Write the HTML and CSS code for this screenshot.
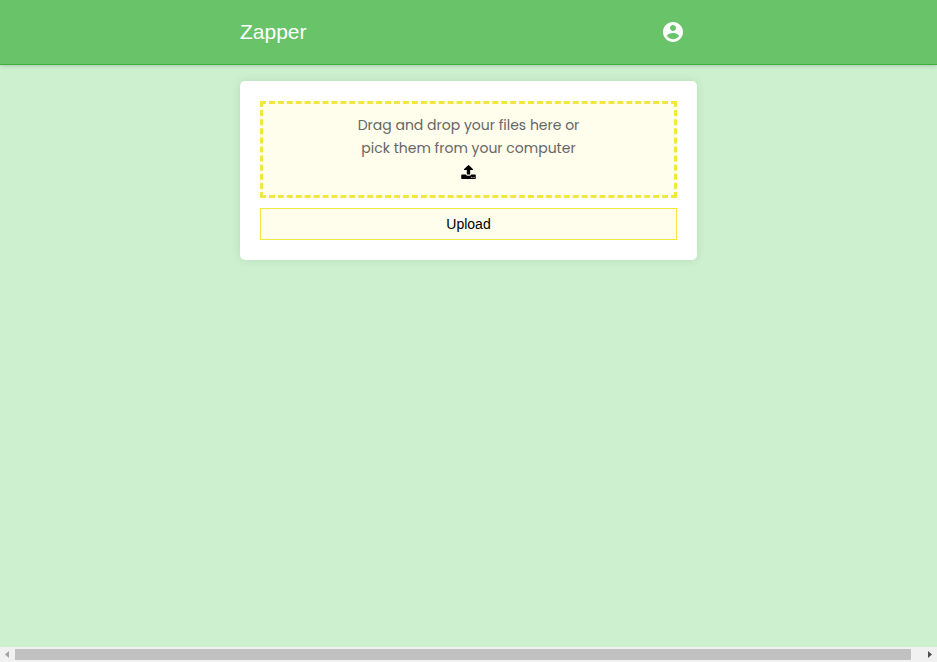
FILE: index.html
```html
<!DOCTYPE html>
<html lang="en">
<head>
<meta charset="utf-8">
<title>Zapper</title>
<link rel="stylesheet" href="styles.css">
</head>
<body>
<header class="topbar">
  <div class="topbar-inner">
    <h1 class="brand">Zapper</h1>
    <button class="account" type="button" aria-label="Account">
      <svg width="24" height="24" viewBox="0 0 24 24" fill="currentColor" aria-hidden="true"><path d="M12 2C6.48 2 2 6.48 2 12s4.48 10 10 10 10-4.480 10-10S17.520 2 12 2zm0 3c1.660 0 3 1.340 3 3s-1.340 3-3 3-3-1.340-3-3 1.340-3 3-3zm0 14.200c-2.500 0-4.710-1.280-6-3.220.03-1.990 4-3.080 6-3.080 1.990 0 5.970 1.090 6 3.080-1.290 1.940-3.500 3.220-6 3.220z"/></svg>
    </button>
  </div>
</header>
<main class="content">
  <form class="card">
    <label class="dropzone">
      <span>Drag and drop your files here or<br>pick them from your computer</span>
      <span class="upload-icon">
        <svg width="15" height="14" viewBox="0 64 1664 1600" aria-hidden="true"><path d="M1280 1472q0-26-19-45t-45-19-45 19-19 45 19 45 45 19 45-19 19-45zm256 0q0-26-19-45t-45-19-45 19-19 45 19 45 45 19 45-19 19-45zm128-224v320q0 40-28 68t-68 28h-1472q-40 0-68-28t-28-68v-320q0-40 28-68t68-28h427q21 56 70.500 92t110.500 36h256q61 0 110.500-36t70.500-92h427q40 0 68 28t28 68zm-325-648q-17 40-59 40h-256v448q0 26-19 45t-45 19h-256q-26 0-45-19t-19-45v-448h-256q-42 0-59-40-17-39 14-69l448-448q18-19 45-19t45 19l448 448q31 30 14 69z"/></svg>
      </span>
      <input class="file-input" type="file" multiple>
    </label>
    <button class="upload" type="button">Upload</button>
  </form>
</main>
<div class="scrollbar" aria-hidden="true">
  <svg class="arrow arrow-off" width="15" height="15" viewBox="0 0 15 15"><path d="M9 4v7L5 7.500z"/></svg>
  <div class="track"><div class="thumb"></div></div>
  <svg class="arrow" width="15" height="15" viewBox="0 0 15 15"><path d="M6 4v7l4-3.500z"/></svg>
</div>
</body>
</html>
```
FILE: styles.css
```css
* {
  box-sizing: border-box;
}

body {
  margin: 0;
  min-height: 100vh;
  display: flex;
  flex-direction: column;
  background: #cdf1ce;
  font-family: "Liberation Sans", Arial, sans-serif;
}

.topbar {
  background: #69c369;
  border-bottom: 1px solid #3fae40;
  box-shadow: 0 0 5px rgba(0, 0, 0, 0.25);
}

.topbar-inner,
.card {
  width: 100%;
  max-width: 457px;
  margin: 0 auto;
}

.topbar-inner {
  display: flex;
  align-items: center;
  justify-content: space-between;
  height: 64px;
}

.brand {
  margin: 0;
  color: #fff;
  font-size: 21px;
  font-weight: 400;
}

.account {
  display: flex;
  padding: 12px;
  border: 0;
  background: none;
  color: #fff;
}

.content {
  flex: 1;
  padding: 16px 0;
}

.card {
  display: flex;
  flex-direction: column;
  gap: 10px;
  padding: 20px;
  background: #fff;
  border-radius: 5px;
  box-shadow: 0 0 10px rgba(0, 0, 0, 0.1);
}

.dropzone {
  padding: 10px 10px 12px;
  border: 3px dashed #f2e641;
  background: #fffdeb;
  color: #666;
  font-family: Poppins, Inter, sans-serif;
  font-size: 14px;
  line-height: 23px;
  text-align: center;
}

.upload-icon {
  display: flex;
  align-items: center;
  justify-content: center;
  height: 23px;
  color: #000;
}

.file-input {
  display: none;
}

.upload {
  height: 32px;
  padding: 0;
  border: 1px solid #f2e641;
  background: #fffdeb;
  color: #000;
  font-family: inherit;
  font-size: 14px;
}

.scrollbar {
  display: flex;
  height: 15px;
  background: #f1f1f1;
}

.arrow {
  fill: #505050;
}

.arrow-off {
  fill: #a3a3a3;
}

.track {
  flex: 1;
  padding: 2px 0;
}

.thumb {
  width: 98.8%;
  height: 11px;
  background: #c1c1c1;
}
```
